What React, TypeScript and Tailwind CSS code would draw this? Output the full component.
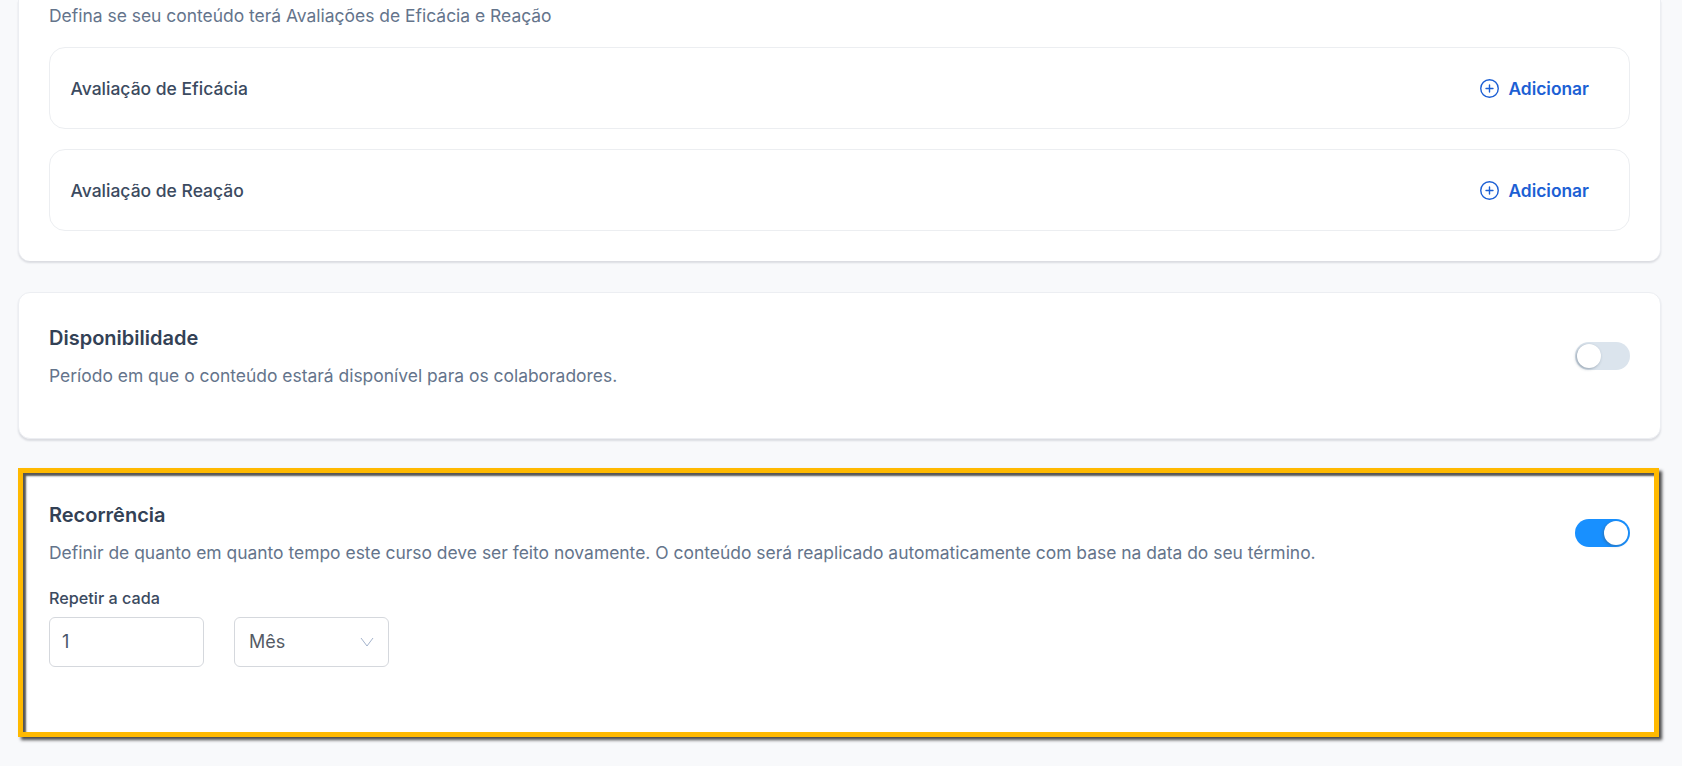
import { CirclePlus } from 'lucide-react';

function AddRow({ label }: { label: string }) {
  return (
    <div className="h-[82px] flex items-center justify-between pl-[20.5px] pr-10 pt-0.5 bg-white border border-[#eceef1] rounded-2xl">
      <span className="text-[17.5px] font-medium text-[#3b4a60]">{label}</span>
      <button className="flex items-center gap-2 text-[17.4px] font-semibold text-[#1c5fd4]">
        <CirclePlus size={21} strokeWidth={1.6} />
        Adicionar
      </button>
    </div>
  );
}

function Toggle({ on, top }: { on: boolean; top: string }) {
  return (
    <div className={`w-[55px] h-7 rounded-full flex items-center px-0.5 shrink-0 ${top} ${on ? 'bg-[#1890ff] justify-end' : 'bg-[#dbe4ed] justify-start'}`}>
      <div className="w-6 h-6 rounded-full bg-white shadow-[-1px_1px_3px_rgba(60,80,100,0.45)]" />
    </div>
  );
}

export default function App() {
  return (
    <div className="h-screen overflow-hidden bg-[#f8f9fb] px-[18px] font-['Inter',sans-serif]">
      <div className="w-[1643px]">
        <section className="h-[261px] bg-white rounded-b-xl border-x border-[#eceef2] shadow-[0_2px_2px_rgba(40,50,70,0.14)] px-[30px] pt-1">
          <p className="text-[17.45px] leading-6 text-[#64748b]">Defina se seu conteúdo terá Avaliações de Eficácia e Reação</p>
          <div className="mt-[19px] flex flex-col gap-5">
            <AddRow label="Avaliação de Eficácia" />
            <AddRow label="Avaliação de Reação" />
          </div>
        </section>

        <section className="mt-[31px] h-[147px] bg-white rounded-xl border border-[#eceef2] shadow-[0_2px_2px_rgba(40,50,70,0.14)] px-[30px] pt-[31px] flex justify-between">
          <div>
            <h2 className="text-xl leading-7 font-semibold text-[#334155]">Disponibilidade</h2>
            <p className="mt-3 text-[17.45px] leading-6 text-[#64748b]">Período em que o conteúdo estará disponível para os colaboradores.</p>
          </div>
          <Toggle on={false} top="mt-[18px]" />
        </section>

        <section className="mt-[29px] w-[1641px] h-[269px] bg-white border-[5px] border-[#ffb900] shadow-[3px_3px_3px_rgba(30,30,30,0.8),inset_3px_3px_2px_rgba(30,30,30,0.75)] pl-[26px] pr-6 pt-7 flex justify-between">
          <div>
            <h2 className="text-xl leading-7 font-semibold text-[#334155]">Recorrência</h2>
            <p className="mt-3 text-[17.45px] leading-6 text-[#64748b]">Definir de quanto em quanto tempo este curso deve ser feito novamente. O conteúdo será reaplicado automaticamente com base na data do seu término.</p>
            <label className="block mt-[23px] text-[16.2px] leading-5 font-medium text-[#3b4a60]">Repetir a cada</label>
            <div className="mt-[9px] flex gap-[30px]">
              <div className="w-[155px] h-[50px] flex items-center pl-3 bg-white border border-[#d5d8dd] rounded-md text-lg text-[#475569]">1</div>
              <div className="w-[155px] h-[50px] flex items-center justify-between pl-[14px] pr-[14px] bg-white border border-[#d5d8dd] rounded-md text-lg text-[#555b65]">
                Mês
                <svg width="14" height="10" viewBox="0 0 14 10" fill="none" stroke="#a4b3cc" strokeWidth="1">
                  <path d="M1 1 L7 9 L13 1" />
                </svg>
              </div>
            </div>
          </div>
          <Toggle on top="mt-[18px]" />
        </section>
      </div>
    </div>
  );
}
